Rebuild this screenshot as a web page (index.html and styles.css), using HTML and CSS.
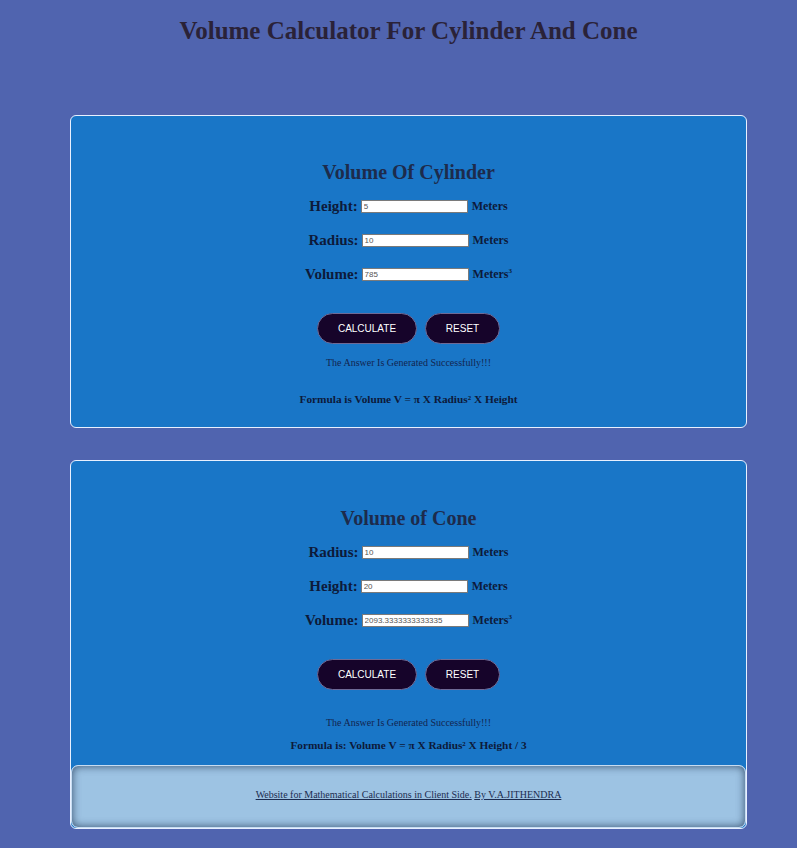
FILE: index.html
```html
<!DOCTYPE html>
<html>
<head>
<meta charset="utf-8">
<title>Volume Calculator</title>
<link rel="stylesheet" href="styles.css">
</head>
<body>
<div class="page">
  <h1 class="title">Volume Calculator For Cylinder And Cone</h1>

  <section class="card card-cyl">
    <h2 class="card-title">Volume Of Cylinder</h2>
    <div class="row"><label class="lbl">Height:</label> <input class="inp" type="text" value="5"> <span class="unit">Meters</span></div>
    <div class="row"><label class="lbl">Radius:</label> <input class="inp" type="text" value="10"> <span class="unit">Meters</span></div>
    <div class="row"><label class="lbl">Volume:</label> <input class="inp" type="text" value="785"> <span class="unit">Meters<sup>3</sup></span></div>
    <div class="btns"><button class="btn btn-calc">CALCULATE</button><button class="btn btn-reset">RESET</button></div>
    <p class="msg msg-cyl">The Answer Is Generated Successfully!!!</p>
    <p class="formula formula-cyl">Formula is Volume V = π X Radius² X Height</p>
  </section>

  <section class="card card-cone">
    <h2 class="card-title">Volume of Cone</h2>
    <div class="row"><label class="lbl">Radius:</label> <input class="inp" type="text" value="10"> <span class="unit">Meters</span></div>
    <div class="row"><label class="lbl">Height:</label> <input class="inp" type="text" value="20"> <span class="unit">Meters</span></div>
    <div class="row"><label class="lbl">Volume:</label> <input class="inp" type="text" value="2093.3333333333335"> <span class="unit">Meters<sup>3</sup></span></div>
    <div class="btns"><button class="btn btn-calc">CALCULATE</button><button class="btn btn-reset">RESET</button></div>
    <p class="msg msg-cone">The Answer Is Generated Successfully!!!</p>
    <p class="formula formula-cone">Formula is: Volume V = π X Radius² X Height / 3</p>
    <footer class="footer">
      <a href="#" class="flink">Website for Mathematical Calculations in Client Side.</a> <a href="#" class="flink">By V.A.JITHENDRA</a>
    </footer>
  </section>
</div>
</body>
</html>
```

FILE: styles.css
```css
html, body {
  margin: 0;
  padding: 0;
  background: #5064af;
}
body {
  font-family: "Liberation Serif", "Times New Roman", serif;
  height: 848px;
  overflow: hidden;
}
.page {
  margin: 0 50px 0 70px;
}
.title {
  margin: 0;
  padding-top: 15px;
  font-size: 25px;
  line-height: 32px;
  font-weight: bold;
  text-align: center;
  color: #2a2238;
}
.card {
  background: #1976c7;
  border: 1px solid #e8f0ff;
  border-radius: 6px;
  text-align: center;
  color: #0d1a3a;
}
.card-cyl {
  margin-top: 68px;
  padding: 44px 0 21px;
}
.card-cone {
  margin-top: 32px;
  padding: 45px 0 0;
}
.card-title {
  margin: 0 0 11px;
  font-size: 20px;
  line-height: 24px;
  font-weight: bold;
  color: #1d2b4c;
}
.row {
  height: 20px;
  line-height: 20px;
  margin-bottom: 14px;
  white-space: nowrap;
}
.lbl {
  font-size: 15px;
  font-weight: bold;
  vertical-align: middle;
}
.inp {
  box-sizing: border-box;
  width: 107px;
  height: 13px;
  padding: 0 2px;
  margin: 0 0 0 -1px;
  border: 1px solid #7a7a7a;
  background: #fff;
  font-family: "Liberation Sans", Arial, sans-serif;
  font-size: 8px;
  color: #555;
  vertical-align: middle;
}
.unit {
  font-size: 12px;
  font-weight: bold;
  vertical-align: middle;
}
.unit sup {
  font-size: 7px;
  line-height: 0;
}
.btns {
  display: flex;
  justify-content: center;
  gap: 8px;
  margin-top: 30px;
}
.btn {
  box-sizing: border-box;
  height: 31px;
  border: 1px solid #6e6a96;
  border-radius: 16px;
  background: #16042a;
  color: #fff;
  font-family: "Liberation Sans", Arial, sans-serif;
  font-size: 10px;
  padding: 0;
}
.btn-calc { width: 100px; }
.btn-reset { width: 75px; }
.msg {
  margin: 0;
  font-size: 10px;
  line-height: 14px;
  color: #13254f;
}
.msg-cyl { margin-top: 12px; }
.msg-cone { margin-top: 26px; }
.formula {
  margin: 0;
  font-size: 11.3px;
  line-height: 14px;
  font-weight: bold;
  color: #0d1a3a;
}
.formula-cyl { margin-top: 22px; }
.formula-cone { margin-top: 8px; }
.footer {
  margin-top: 13px;
  height: 63px;
  box-sizing: border-box;
  line-height: 57px;
  background: #9dc3e3;
  border: 1px solid #c6dcf2;
  border-radius: 7px;
  box-shadow: inset 0 0 9px rgba(20, 40, 70, 0.75);
  font-size: 10px;
}
.flink {
  color: #1c2c50;
  text-decoration: underline;
}
```
